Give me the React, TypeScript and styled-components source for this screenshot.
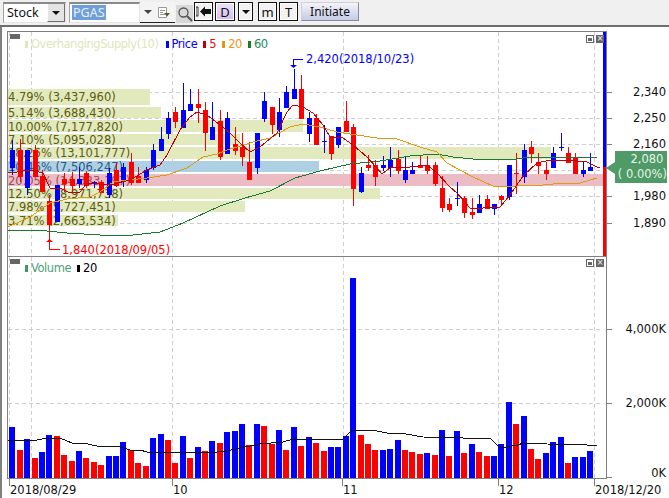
import { FC } from 'react';
import styled, { createGlobalStyle } from 'styled-components';

const FONT = `"DejaVu Sans", Verdana, sans-serif`;
const UI_FONT = `"Noto Sans", "DejaVu Sans", sans-serif`;

const GlobalStyle = createGlobalStyle`
  html, body {
    margin: 0;
    padding: 0;
    background: #fff;
    overflow: hidden;
    font-family: ${FONT};
  }
`;

const StyledPage = styled.div`
  width: 669px;
  height: 498px;
  display: flex;
  flex-direction: column;
  background: #fff;
  overflow: hidden;
`;
const StyledToolbar = styled.div`
  height: 25px;
  flex: none;
  box-sizing: content-box;
  display: flex;
  align-items: flex-start;
  padding-left: 3px;
  background: #f0f0f0;
  border-bottom: 2px solid #6e6e6e;
`;
const StyledCombo = styled.div<{ $width: number; $ml?: number }>`
  width: ${p => p.$width}px;
  height: 21px;
  margin: 2px 0 0 ${p => p.$ml || 0}px;
  box-sizing: border-box;
  display: flex;
  align-items: stretch;
  background: #fff;
  border: 1px solid #a0a0a0;
  border-right-color: #e4e4e4;
  border-bottom-color: #e4e4e4;
  border-top: 2px solid #8a8a8a;
  font-size: 12.5px;
  color: #111;
  font-family: ${UI_FONT};
`;
const StyledComboText = styled.span`
  flex: 1;
  padding-left: 3px;
  line-height: 17px;
`;
const StyledSelected = styled.span`
  display: inline-block;
  height: 15px;
  line-height: 15px;
  margin: 1px 0 0 2px;
  padding: 0 1px;
  background: #6f9fd8;
  color: #e8f0fa;
`;
const StyledDropButton = styled.div`
  width: 16px;
  display: flex;
  align-items: center;
  justify-content: center;
  background: #e4e4e4;
  border-left: 1px solid #fff;
  border-right: 1px solid #707070;
  border-bottom: 1px solid #707070;
`;
const StyledArrow = styled.i<{ $color?: string }>`
  display: block;
  width: 0;
  height: 0;
  border-left: 4px solid transparent;
  border-right: 4px solid transparent;
  border-top: 4px solid ${p => p.$color || '#111'};
`;
const StyledFlatGroup = styled.div`
  width: 35px;
  height: 21px;
  margin-top: 2px;
  box-sizing: border-box;
  display: flex;
  align-items: center;
  justify-content: space-around;
  padding: 0 1px;
  background: #f4f4f4;
  border-bottom: 1px solid #222;
`;
const StyledSearch = styled.div`
  width: 17px;
  height: 18px;
  margin: 5px 0 0 1px;
  display: flex;
  align-items: center;
  justify-content: center;
  background: #d8d8d8;
`;
const StyledToolButton = styled.div<{ $width: number; $ml: number; $active?: boolean }>`
  width: ${p => p.$width}px;
  height: 19px;
  margin: 2px 0 0 ${p => p.$ml}px;
  box-sizing: border-box;
  display: flex;
  align-items: center;
  justify-content: center;
  border: 1px solid #111;
  outline: 1px solid #fff;
  outline-offset: -2px;
  background: ${p => (p.$active ? 'linear-gradient(#ece2f8, #d4bcf0)' : '#f2f2f2')};
  font-family: ${UI_FONT};
  font-size: 13px;
  color: #111;
`;
const StyledInitiate = styled.div`
  width: 58px;
  height: 19px;
  margin: 2px 0 0 3px;
  box-sizing: border-box;
  display: flex;
  align-items: flex-end;
  justify-content: center;
  border: 1px solid #d0d0d8;
  border-right-color: #8a8a98;
  border-bottom-color: #8a8a98;
  background: linear-gradient(#f4f4fa, #c4cbe6);
  font-family: ${UI_FONT};
  font-size: 12px;
  line-height: 16px;
  color: #111;
`;
const StyledBody = styled.div`
  flex: 1;
  display: flex;
  min-height: 0;
`;
const StyledLeftEdge = styled.div`
  width: 2px;
  background: #808080;
`;
const StyledCharts = styled.div`
  flex: 1;
  display: flex;
  flex-direction: column;
  padding: 4px 0 0 5px;
`;
const StyledPane = styled.div<{ $height: number }>`
  position: relative;
  height: ${p => p.$height}px;
  flex: none;
  svg {
    display: block;
  }
`;
const StyledCollapse = styled.div<{ $top: number }>`
  position: absolute;
  left: 3px;
  top: ${p => p.$top}px;
  width: 10px;
  height: 5px;
  background: #666;
`;
const StyledLegend = styled.div<{ $top: number }>`
  position: absolute;
  left: 18px;
  top: ${p => p.$top}px;
  display: flex;
  align-items: center;
  font-size: 11.5px;
  line-height: 14px;
  letter-spacing: -0.45px;
`;
const StyledMarker = styled.i<{ $color: string; $ml?: number }>`
  width: 3px;
  height: 7px;
  margin: 0 3px 0 ${p => p.$ml || 0}px;
  background: ${p => p.$color};
`;
const StyledLabel = styled.span<{ $color: string }>`
  color: ${p => p.$color};
`;
const StyledPaneButtons = styled.div<{ $top: number }>`
  position: absolute;
  left: 579px;
  top: ${p => p.$top}px;
  display: flex;
  gap: 2px;
`;
const StyledPaneButton = styled.div<{ $dark?: boolean }>`
  width: 8px;
  height: 8px;
  box-sizing: border-box;
  display: flex;
  align-items: center;
  justify-content: center;
  background: ${p => (p.$dark ? '#666' : '#fff')};
  border: 1px solid #666;
  color: #fff;
  font-size: 8px;
  line-height: 6px;
  &::before {
    content: ${p => (p.$dark ? "'×'" : "''")};
    ${p => (p.$dark ? '' : 'width: 4px; height: 3px; background: #666;')}
  }
`;
const StyledPriceTag = styled.div`
  position: absolute;
  left: 608px;
  top: 120px;
  width: 52px;
  height: 32px;
  background: #4f9a66;
  color: #e8f4ec;
  font-size: 11.5px;
  line-height: 15px;
  text-align: right;
  padding-top: 1px;
  box-sizing: border-box;
  white-space: pre;
  &::before {
    content: '';
    position: absolute;
    left: -9px;
    top: 11px;
    border-top: 6px solid transparent;
    border-bottom: 6px solid transparent;
    border-right: 9px solid #4f9a66;
  }
`;
const StyledDateAxis = styled.svg`
  display: block;
  flex: none;
`;

type Candle = [number, number, number, number, 'r' | 'b'];

const CANDLES: Candle[] = [
  [140, 150, 168, 175, 'b'], [139, 150, 177, 182, 'r'], [150, 150, 188, 195, 'b'], [145, 150, 177, 177, 'r'],
  [170, 176, 192, 192, 'r'], [195, 201, 225, 241, 'r'], [185, 185, 222, 222, 'b'], [173, 179, 184, 192, 'r'],
  [172, 179, 186, 193, 'r'], [167, 179, 184, 188, 'b'], [171, 173, 186, 188, 'r'], [181, 182, 183, 188, 'b'],
  [180, 182, 193, 193, 'r'], [168, 173, 195, 198, 'b'], [163, 170, 186, 187, 'r'], [163, 167, 182, 187, 'b'],
  [153, 162, 183, 185, 'r'], [167, 176, 183, 183, 'r'], [167, 170, 180, 183, 'b'], [144, 150, 168, 170, 'b'],
  [127, 139, 151, 151, 'b'], [112, 118, 134, 139, 'b'], [107, 112, 122, 128, 'r'], [83, 110, 128, 128, 'b'],
  [89, 104, 111, 111, 'b'], [89, 104, 108, 123, 'r'], [102, 110, 133, 151, 'r'], [102, 127, 140, 140, 'b'],
  [110, 121, 157, 160, 'r'], [112, 118, 154, 154, 'b'], [127, 144, 151, 155, 'r'], [133, 147, 157, 166, 'r'],
  [142, 162, 180, 180, 'r'], [133, 133, 168, 174, 'b'], [92, 101, 119, 122, 'b'], [107, 107, 125, 134, 'r'],
  [98, 112, 130, 137, 'b'], [86, 92, 108, 108, 'b'], [69, 89, 99, 99, 'b'], [75, 89, 119, 119, 'r'],
  [112, 118, 134, 142, 'b'], [114, 118, 145, 145, 'r'], [125, 141, 142, 153, 'b'], [136, 136, 154, 160, 'r'],
  [127, 127, 145, 148, 'b'], [101, 121, 132, 132, 'r'], [124, 127, 189, 206, 'r'], [167, 173, 192, 193, 'b'],
  [155, 165, 168, 171, 'r'], [160, 165, 177, 186, 'r'], [156, 165, 168, 171, 'b'], [147, 160, 168, 177, 'b'],
  [150, 159, 171, 174, 'r'], [156, 170, 180, 183, 'b'], [162, 170, 174, 174, 'b'], [156, 165, 168, 168, 'r'],
  [156, 165, 171, 174, 'r'], [162, 165, 184, 186, 'r'], [176, 188, 208, 212, 'r'], [198, 204, 210, 212, 'r'],
  [182, 198, 199, 206, 'b'], [196, 198, 213, 218, 'r'], [198, 212, 215, 219, 'r'], [195, 204, 213, 213, 'b'],
  [195, 199, 209, 209, 'r'], [204, 204, 209, 215, 'b'], [195, 196, 200, 205, 'r'], [165, 165, 197, 200, 'b'],
  [153, 173, 174, 194, 'r'], [144, 150, 177, 183, 'b'], [141, 147, 154, 163, 'r'], [153, 162, 166, 174, 'r'],
  [162, 170, 174, 180, 'r'], [147, 153, 168, 168, 'b'], [133, 147, 148, 151, 'b'], [147, 153, 163, 163, 'r'],
  [153, 157, 174, 174, 'r'], [162, 170, 174, 177, 'b'], [153, 167, 171, 171, 'b'],
];

const VOLUMES: [number, 'r' | 'b'][] = [
  [51, 'b'], [28, 'r'], [39, 'b'], [20, 'r'], [26, 'b'], [43, 'b'], [42, 'r'], [23, 'r'], [17, 'r'], [27, 'b'],
  [20, 'r'], [16, 'r'], [13, 'r'], [22, 'b'], [22, 'b'], [36, 'b'], [28, 'r'], [15, 'r'], [12, 'r'], [40, 'b'],
  [44, 'b'], [38, 'r'], [15, 'r'], [42, 'b'], [20, 'r'], [31, 'b'], [27, 'r'], [37, 'b'], [35, 'r'], [46, 'b'],
  [47, 'b'], [54, 'b'], [33, 'r'], [54, 'b'], [52, 'r'], [34, 'r'], [48, 'b'], [28, 'r'], [51, 'b'], [32, 'r'],
  [41, 'b'], [35, 'r'], [27, 'r'], [31, 'b'], [31, 'b'], [42, 'b'], [200, 'b'], [43, 'r'], [34, 'r'], [28, 'r'],
  [28, 'b'], [29, 'b'], [38, 'b'], [28, 'r'], [26, 'r'], [24, 'r'], [25, 'b'], [23, 'r'], [48, 'b'], [22, 'r'],
  [47, 'b'], [25, 'r'], [34, 'b'], [26, 'r'], [22, 'r'], [22, 'b'], [34, 'b'], [76, 'b'], [54, 'r'], [62, 'b'],
  [29, 'r'], [19, 'r'], [25, 'b'], [36, 'b'], [41, 'b'], [15, 'r'], [21, 'b'], [21, 'b'], [27, 'b'],
];

const BANDS = [
  { y: 89, h: 16, end: 150, cy: 97, color: '#e2e9bd', ink: '#5c5c12', text: '4.79% (3,437,960)' },
  { y: 107, h: 11, end: 161, cy: 113, color: '#e2e9bd', ink: '#5c5c12', text: '5.14% (3,688,430)' },
  { y: 120, h: 12, end: 303, cy: 127, color: '#e2e9bd', ink: '#5c5c12', text: '10.00% (7,177,820)' },
  { y: 134, h: 11, end: 240, cy: 140, color: '#e2e9bd', ink: '#5c5c12', text: '7.10% (5,095,028)' },
  { y: 147, h: 12, end: 551, cy: 153, color: '#e2e9bd', ink: '#5c5c12', text: '18.26% (13,101,777)' },
  { y: 161, h: 11, end: 319, cy: 167, color: '#aed0e5', ink: '#2a5a80', text: '10.46% (7,506,247)' },
  { y: 174, h: 12, end: 603, cy: 181, color: '#ecbcc5', ink: '#a04a5a', text: '20.05% (14,383,197)' },
  { y: 188, h: 11, end: 380, cy: 194, color: '#e2e9bd', ink: '#5c5c12', text: '12.50% (8,971,738)' },
  { y: 201, h: 11, end: 245, cy: 207, color: '#e2e9bd', ink: '#5c5c12', text: '7.98% (5,727,451)' },
  { y: 215, h: 11, end: 118, cy: 221, color: '#e2e9bd', ink: '#5c5c12', text: '3.71% (2,663,534)' },
];

const MA5 =
  '8,173 17,172 30,170 43,173 50,188 60,188 70,193 80,192 87,183 110,185 130,180 147,170 160,165 167,155 180,130 190,117 197,112 207,115 220,125 230,133 240,143 250,152 260,147 277,133 287,112 293,105 303,107 313,113 323,125 330,137 343,138 353,145 367,157 377,168 382,174 390,168 410,167 427,165 437,173 450,187 457,193 470,208 483,208 500,207 510,195 523,176 537,163 550,160 567,160 587,162 597,167 600,167';
const MA20 =
  '8,227 30,217 50,203 67,199 90,197 100,192 113,182 130,180 147,178 167,175 187,168 203,157 217,154 230,149 237,147 253,142 270,138 290,127 303,124 320,127 337,132 357,135 377,138 397,139 420,147 437,152 447,163 473,177 493,186 517,186 543,185 563,183 580,183 597,178';
const MA60 =
  '8,230 37,230 67,233 117,236 133,235 160,232 183,223 207,212 220,206 245,198 270,191 295,178 320,171 350,164 380,161 410,156 437,154 453,157 473,159 517,159 530,157 550,157 577,157 597,157';
const VOL20 =
  '8,441 23,440 37,440 47,438 60,438 72,443 83,443 97,446 120,447 130,450 140,450 147,452 170,452 197,452 207,453 227,451 240,448 260,444 283,442 293,439 317,440 343,439 352,430 372,430 387,433 400,433 423,437 463,438 490,438 500,448 518,445 523,443 547,444 587,445 597,446';

const PRICE_TICKS: [number, string][] = [
  [92, '2,340'],
  [118, '2,250'],
  [144, '2,160'],
  [196, '1,980'],
  [223, '1,890'],
];
const VOLUME_TICKS: [number, number, string][] = [
  [329, 333, '4,000K'],
  [403, 407, '2,000K'],
  [477, 477, '0K'],
];
const GRID_X = [9, 31, 172, 343, 498, 594];
const RED = '#ff0000';
const BLUE = '#0000ff';
const candleX = (i: number) => Math.round(12.3 + 7.41 * i);

const GridLines: FC<{ rows: number[]; top: number; bottom: number }> = ({ rows, top, bottom }) => (
  <g stroke="#cfcfcf" strokeDasharray="4 3" shapeRendering="crispEdges">
    {rows.map(y => (
      <line key={y} x1={8} x2={603} y1={y + 0.5} y2={y + 0.5} />
    ))}
    {GRID_X.map(x => (
      <line key={x} x1={x + 0.5} x2={x + 0.5} y1={top} y2={bottom} />
    ))}
  </g>
);

const PricePane: FC = () => (
  <StyledPane $height={225}>
    <svg width={662} height={225} viewBox="7 31 662 225" fontFamily={FONT} fontSize={11.5}>
      <GridLines rows={[92, 118, 144, 170, 196, 223]} top={32} bottom={256} />
      <g shapeRendering="crispEdges">
        {BANDS.map(b => (
          <rect key={b.y} x={8} y={b.y} width={b.end - 8} height={b.h} fill={b.color} />
        ))}
      </g>
      {BANDS.map(b => (
        <text key={b.y} x={8} y={b.cy + 4} fill={b.ink}>
          {b.text}
        </text>
      ))}
      <g shapeRendering="crispEdges">
        {CANDLES.map(([hi, top, bottom, lo, c], i) => {
          const x = candleX(i);
          const color = c === 'r' ? RED : BLUE;
          return (
            <g key={i} fill={color}>
              <rect x={x} y={hi} width={1} height={lo - hi} />
              <rect x={x - 2} y={top} width={5} height={Math.max(bottom - top, 1)} />
            </g>
          );
        })}
      </g>
      <g fill="none" shapeRendering="crispEdges">
        <polyline points={MA60} stroke="#1a7a30" />
        <polyline points={MA20} stroke="#e09a10" />
        <polyline points={MA5} stroke="#c00000" />
      </g>

      <path d="M293.5 66 V59.5 H303" fill="none" stroke={BLUE} shapeRendering="crispEdges" />
      <path d="M290 65 H297 L293.5 68 Z" fill={BLUE} />
      <text x={306} y={63} fill={BLUE}>
        2,420(2018/10/23)
      </text>
      <path d="M49.5 242 V249.5 H60" fill="none" stroke={RED} shapeRendering="crispEdges" />
      <path d="M46 242 H53 L49.5 239 Z" fill={RED} />
      <text x={62} y={254} fill={RED}>
        1,840(2018/09/05)
      </text>

      <path d="M7.5 256 V31.5 H606.5 V256" fill="none" stroke="#808080" shapeRendering="crispEdges" />
      <g shapeRendering="crispEdges">
        <rect x={603} y={32} width={3} height={135} fill={BLUE} />
        <rect x={603} y={167} width={3} height={89} fill={RED} />
      </g>
      {PRICE_TICKS.map(([y, label]) => (
        <g key={y}>
          <line x1={607} x2={612} y1={y + 0.5} y2={y + 0.5} stroke="#808080" shapeRendering="crispEdges" />
          <text x={666} y={y + 4} textAnchor="end" fill="#111">
            {label}
          </text>
        </g>
      ))}
    </svg>
    <StyledCollapse $top={3} />
    <StyledLegend $top={6}>
      <StyledMarker $color="#dfe6b8" />
      <StyledLabel $color="#e0e6b8">OverhangingSupply(10)</StyledLabel>
      <StyledMarker $color={BLUE} $ml={7} />
      <StyledLabel $color={BLUE}>Price</StyledLabel>
      <StyledMarker $color="#c00000" $ml={6} />
      <StyledLabel $color="#e01010">5</StyledLabel>
      <StyledMarker $color="#e09a10" $ml={6} />
      <StyledLabel $color="#e8981a">20</StyledLabel>
      <StyledMarker $color="#1a7a30" $ml={6} />
      <StyledLabel $color="#1a8a5a">60</StyledLabel>
    </StyledLegend>
    <StyledPaneButtons $top={4}>
      <StyledPaneButton />
      <StyledPaneButton $dark />
    </StyledPaneButtons>
    <StyledPriceTag>{'2,080 \n( 0.00%)'}</StyledPriceTag>
  </StyledPane>
);

const VolumePane: FC = () => (
  <StyledPane $height={223}>
    <svg width={662} height={223} viewBox="7 256 662 223" fontFamily={FONT} fontSize={11.5}>
      <GridLines rows={[329, 403]} top={257} bottom={478} />
      <g shapeRendering="crispEdges">
        {VOLUMES.map(([h, c], i) => (
          <rect key={i} x={candleX(i) - 3} y={478 - h} width={6} height={h} fill={c === 'r' ? RED : BLUE} />
        ))}
        <polyline points={VOL20} fill="none" stroke="#111" />
      </g>
      <path d="M7.5 256 V478.5 H606.5 V256.5 H7.5" fill="none" stroke="#808080" shapeRendering="crispEdges" />
      {VOLUME_TICKS.map(([y, base, label]) => (
        <g key={label}>
          <line x1={607} x2={612} y1={y + 0.5} y2={y + 0.5} stroke="#808080" shapeRendering="crispEdges" />
          <text x={666} y={base} textAnchor="end" fill="#111">
            {label}
          </text>
        </g>
      ))}
    </svg>
    <StyledCollapse $top={3} />
    <StyledLegend $top={5}>
      <StyledMarker $color="#3f9a5f" />
      <StyledLabel $color="#4f9f78">Volume</StyledLabel>
      <StyledMarker $color="#000" $ml={6} />
      <StyledLabel $color="#000">20</StyledLabel>
    </StyledLegend>
    <StyledPaneButtons $top={3}>
      <StyledPaneButton />
      <StyledPaneButton $dark />
    </StyledPaneButtons>
  </StyledPane>
);

const DATE_TICKS: [number, string][] = [
  [9, '2018/08/29'],
  [172, '10'],
  [342, '11'],
  [498, '12'],
  [594, '2018/12/20'],
];

const DateAxis: FC = () => (
  <StyledDateAxis width={662} height={19} viewBox="7 479 662 19" fontFamily={FONT} fontSize={11.5}>
    {DATE_TICKS.map(([x, label]) => (
      <g key={x}>
        <line x1={x + 0.5} x2={x + 0.5} y1={479} y2={486} stroke="#808080" shapeRendering="crispEdges" />
        <text x={x + 1} y={494} fill="#111">
          {label}
        </text>
      </g>
    ))}
  </StyledDateAxis>
);

const Toolbar: FC = () => (
  <StyledToolbar>
    <StyledCombo $width={63}>
      <StyledComboText>Stock</StyledComboText>
      <StyledDropButton>
        <StyledArrow />
      </StyledDropButton>
    </StyledCombo>
    <StyledCombo $width={71} $ml={3}>
      <StyledSelected>PGAS</StyledSelected>
    </StyledCombo>
    <StyledFlatGroup>
      <StyledArrow $color="#444" />
      <svg width={14} height={13} viewBox="0 0 14 13">
        <path d="M1.5 1.5 H9.5 V11.5 H1.5 Z" fill="#fff" stroke="#999" />
        <path d="M3 4.5 H8 M3 6.5 H6 M3 8.5 H8" stroke="#999" />
        <path d="M7 7 H13 L10 10.5 Z" fill="#5a5a20" />
      </svg>
    </StyledFlatGroup>
    <StyledSearch>
      <svg width={16} height={16} viewBox="0 0 16 16" fill="none" stroke="#555">
        <circle cx={6.5} cy={6.5} r={4.5} strokeWidth={1.3} />
        <path d="M10 10 L15 15" strokeWidth={2} />
      </svg>
    </StyledSearch>
    <StyledToolButton $width={19} $ml={1}>
      <svg width={15} height={11} viewBox="0 0 15 11" fill="#111">
        <rect x={0} y={1} width={2} height={9} fill="none" stroke="#111" strokeWidth={0.8} />
        <path d="M4 5.5 L9 0.5 V3 H15 V8 H9 V10.5 Z" />
      </svg>
    </StyledToolButton>
    <StyledToolButton $width={20} $ml={2} $active>
      D
    </StyledToolButton>
    <StyledToolButton $width={15} $ml={3}>
      <StyledArrow />
    </StyledToolButton>
    <StyledToolButton $width={19} $ml={5}>
      m
    </StyledToolButton>
    <StyledToolButton $width={19} $ml={2}>
      T
    </StyledToolButton>
    <StyledInitiate>Initiate</StyledInitiate>
  </StyledToolbar>
);

export default function App() {
  return (
    <>
      <GlobalStyle />
      <StyledPage>
        <Toolbar />
        <StyledBody>
          <StyledLeftEdge />
          <StyledCharts>
            <PricePane />
            <VolumePane />
            <DateAxis />
          </StyledCharts>
        </StyledBody>
      </StyledPage>
    </>
  );
}
